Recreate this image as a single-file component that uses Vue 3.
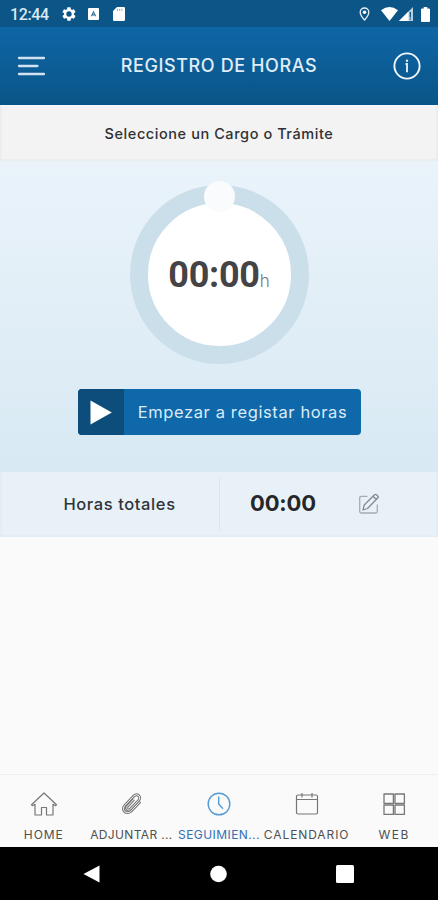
<script setup>
const tabs = [
  { id: 'home', label: 'HOME', spacing: '0.95px' },
  { id: 'clip', label: 'ADJUNTAR ...', spacing: '0.35px' },
  { id: 'clock', label: 'SEGUIMIEN...', spacing: '0.42px', active: true },
  { id: 'calendar', label: 'CALENDARIO', spacing: '0.9px' },
  { id: 'web', label: 'WEB', spacing: '1.5px' },
]
</script>

<template>
  <div class="screen">
    <div class="status">
      <span class="time">12:44</span>
      <svg class="gear" width="16" height="16" viewBox="0 0 24 24"><path fill="#fff" fill-rule="evenodd" d="M19.4 13a7.500 7.500 0 0 0 0-2l2.100-1.650a.5.5 0 0 0 .12-.64l-2-3.460a.5.5 0 0 0-.6-.22l-2.500 1a7.300 7.300 0 0 0-1.700-1l-.38-2.650a.5.5 0 0 0-.5-.42h-4a.5.5 0 0 0-.5.42l-.38 2.650a7.300 7.300 0 0 0-1.700 1l-2.500-1a.5.5 0 0 0-.6.22l-2 3.460a.5.5 0 0 0 .12.640L4.500 11a7.500 7.500 0 0 0 0 2l-2.100 1.650a.5.5 0 0 0-.12.640l2 3.460c.12.220.39.3.6.22l2.500-1a7.300 7.300 0 0 0 1.700 1l.38 2.650c.04.240.25.420.5.420h4c.25 0 .46-.18.5-.42l.38-2.650a7.300 7.300 0 0 0 1.700-1l2.500 1c.22.080.48 0 .6-.22l2-3.460a.5.5 0 0 0-.12-.64zM12 16a4 4 0 1 1 0-8 4 4 0 0 1 0 8z" /></svg>
      <svg class="app" width="11" height="12" viewBox="0 0 11 12"><rect width="11" height="12" rx="1" fill="#fff" /><path d="M3.400 8.300 5.500 3.800l2.100 4.500M4.200 6.900h2.600" fill="none" stroke="#3f789e" stroke-width="1.200" /></svg>
      <svg class="sd" width="12" height="14" viewBox="0 0 12 14"><path d="M4 0h6.800Q12 0 12 1.200v11.600q0 1.200-1.200 1.200H1.200Q0 14 0 12.800V4z" fill="#fff" /><path d="M4.500 1.800v2M6.700 1.800v2M8.900 1.800v2" stroke="#7fa6c2" /></svg>
      <span class="fill"></span>
      <svg class="pin" width="11" height="14" viewBox="0 0 11 14"><path d="M5.500 1C3 1 1.200 2.900 1.200 5.200c0 3 4.300 7.800 4.300 7.800s4.300-4.800 4.300-7.800C9.800 2.900 8 1 5.500 1z" fill="none" stroke="#e6eff5" stroke-width="1.300" /><circle cx="5.500" cy="5.200" r="1.800" fill="#fff" /></svg>
      <svg class="wifi" width="17" height="14" viewBox="0 0 17 14"><path d="M0 3.200Q8.500-3 17 3.200L8.500 14z" fill="#fff" /></svg>
      <svg class="signal" width="14" height="14" viewBox="0 0 14 14"><path d="M14 0v14H0z" fill="#b9cfde" /><path d="M9.500 4.500V14H0z" fill="#fff" /><path d="M11.300 5v5.500M11.300 11.500v1.300" stroke="#0b5587" stroke-width="1.300" /></svg>
      <svg class="battery" width="9" height="15" viewBox="0 0 9 15"><path d="M2.700 0h3.600v1.500H8q1 0 1 1V14q0 1-1 1H1q-1 0-1-1V2.500q0-1 1-1h1.700z" fill="#fff" /></svg>
    </div>

    <header class="header">
      <svg width="28" height="20" viewBox="0 0 28 20"><path d="M2 2h25M2 10h18.500M2 18h25" stroke="#d3e2f0" stroke-width="2.300" stroke-linecap="round" /></svg>
      <h1>REGISTRO DE HORAS</h1>
      <svg width="28" height="28" viewBox="0 0 28 28"><circle cx="14" cy="14" r="12.600" fill="none" stroke="#f2f8fc" stroke-width="1.900" /><circle cx="14" cy="8.800" r="1.200" fill="#e9f3fa" /><path d="M12.500 12H14v8.300" fill="none" stroke="#e9f3fa" stroke-width="1.800" /></svg>
    </header>

    <div class="selector"><span>Seleccione un Cargo o Trámite</span></div>

    <section class="panel">
      <div class="dial">
        <i class="knob"></i>
        <span class="digits">00:00</span><span class="unit">h</span>
      </div>
      <button class="start">
        <span class="play"><svg width="22" height="25" viewBox="0 0 22 25"><path d="M.5.500v24L21.800 12.500z" fill="#fff" /></svg></span>
        <span class="start-label">Empezar a registar horas</span>
      </button>
    </section>

    <section class="totals">
      <div class="total-label"><span>Horas totales</span></div>
      <div class="total-value">
        <b>00:00</b>
        <svg width="22" height="22" viewBox="0 0 22 22" fill="none" stroke-linejoin="round"><path d="M9.500 3.300H3.200Q1.700 3.300 1.700 4.800V18.500Q1.700 20 3.200 20H17.800Q19.300 20 19.300 18.500V11.500" stroke="#a6abaf" stroke-width="1.300" /><path d="m5 17 1.200-5L16.500 1.800Q17.400.8 18.500 1.800L19.700 3Q20.700 4 19.700 5L9.500 15.500zM15 3.300l3.200 3.200" stroke="#85898c" stroke-width="1.300" /></svg>
      </div>
    </section>

    <div class="blank"></div>

    <nav class="tabs">
      <div v-for="t in tabs" :key="t.id" class="tab" :class="{ active: t.active }">
        <svg width="28" height="28" viewBox="0 0 28 28" fill="none" stroke="currentColor" stroke-width="1.200" stroke-linejoin="round">
          <path v-if="t.id === 'home'" d="M14 3 1.500 14.800l.9.900 2.600-1.500V25h6.500v-7.500h5V25H23V14.200l2.600 1.500.9-.9z" />
          <g v-else-if="t.id === 'clip'" transform="translate(2.700 2)">
            <path d="m20.500 9.500-8.700 9.300c-4.700 4.700-11-.8-6.600-5.400l8.700-9.200c3.500-3.600 8.300.5 5.100 4.200l-8.200 8.700c-2.200 2.300-5.200-.4-3.200-2.700l6.500-7.100" stroke-width="2.900" />
            <path d="m20.500 9.500-8.700 9.300c-4.700 4.700-11-.8-6.600-5.400l8.700-9.200c3.500-3.600 8.300.5 5.100 4.200l-8.200 8.700c-2.200 2.300-5.200-.4-3.200-2.700l6.500-7.100" stroke="#fafafa" stroke-width="1" />
          </g>
          <g v-else-if="t.id === 'clock'"><circle cx="14" cy="14" r="10.800" stroke-width="1.400" /><path d="M13.700 6.500V14l4.300 4.700" stroke-width="1.400" /></g>
          <g v-else-if="t.id === 'calendar'"><rect x="3.500" y="5" width="21" height="19" rx="1.500" /><path d="M3.500 9.500h21M9 3v4.500M19 3v4.500" /></g>
          <path v-else d="M4 4h9.400v9.400H4zM15 4h9.400v9.400H15zM4 15h9.400v9.400H4zM15 15h9.400v9.400H15z" stroke-width="1.300" />
        </svg>
        <span class="tab-label" :style="{ letterSpacing: t.spacing }">{{ t.label }}</span>
      </div>
    </nav>

    <div class="system">
      <svg width="17" height="18" viewBox="0 0 17 18"><path d="M16.500.5v17L.5 9z" fill="#fff" /></svg>
      <svg width="17" height="18" viewBox="0 0 17 18"><circle cx="8.500" cy="9" r="8.300" fill="#fff" /></svg>
      <svg width="18" height="18" viewBox="0 0 18 18"><rect width="18" height="18" rx="1.500" fill="#fff" /></svg>
    </div>
  </div>
</template>

<style>
body { margin: 0; }
</style>

<style scoped>
* { box-sizing: border-box; }
svg { display: block; flex: none; }
.screen { width: 438px; height: 900px; display: flex; flex-direction: column; background: #fafafa; font-family: Inter, "Open Sans", sans-serif; overflow: hidden; white-space: nowrap; }
.status { height: 27px; background: #0b5587; display: flex; align-items: center; padding: 1px 8px 0 10px; flex: none; }
.time { font: 500 16px/20px Roboto, sans-serif; color: #dce9f2; width: 51px; letter-spacing: -.4px; padding-top: 2px; }
.app { margin-left: 11px; }
.sd { margin-left: 14px; }
.fill { flex: 1; }
.wifi { margin-left: 11px; }
.signal { margin-left: 1px; }
.battery { margin-left: 8px; }
.header { height: 78px; flex: none; background: linear-gradient(#0e66a6, #0a5587); display: flex; align-items: center; justify-content: space-between; padding: 0 17px 0 17px; }
h1 { margin: 0; font-size: 18px; line-height: 24px; font-weight: 500; color: #e0edf8; letter-spacing: .6px; }
.selector { height: 56px; flex: none; background: #f3f3f3; border: 2px solid #ebeeef; border-top: 2px solid #f4f4fb; display: flex; align-items: center; justify-content: center; font-size: 14.500px; font-weight: 500; color: #303132; letter-spacing: .57px; }
.panel { height: 311px; flex: none; background: linear-gradient(#eaf3fa, #d8e9f3); display: flex; flex-direction: column; align-items: center; padding-top: 24px; }
.dial { position: relative; width: 179px; height: 179px; border-radius: 50%; background: #fff; border: 18px solid #cbdfeb; display: flex; align-items: baseline; justify-content: center; padding-top: 50px; }
.knob { position: absolute; left: 56px; top: -22px; width: 31px; height: 31px; border-radius: 50%; background: #fafbfc; }
.digits { font: 700 36px/44px Roboto, sans-serif; color: #454345; letter-spacing: -.3px; }
.unit { font-size: 17px; font-weight: 300; color: #777; }
.start { margin: 25px 0 0; padding: 0; width: 283px; height: 46px; border: 0; border-radius: 4px; overflow: hidden; background: #0e68aa; display: flex; align-items: center; font-family: inherit; }
.play { width: 46px; height: 46px; background: #0c4d7b; display: flex; align-items: center; justify-content: center; }
.start-label { flex: 1; text-align: center; font-size: 16.500px; font-weight: 400; color: #dcebf8; letter-spacing: .62px; padding-left: 1px; }
.totals { height: 65px; flex: none; background: #e9f1f8; display: flex; align-items: center; border: 2px solid #e3edf3; border-top-width: 0; }
.total-label { width: 218px; height: 54px; border-right: 1px solid #dce5ec; display: flex; align-items: center; justify-content: center; padding-left: 18px; font-size: 16.500px; font-weight: 500; color: #303438; letter-spacing: .6px; }
.total-value { flex: 1; display: flex; align-items: center; padding-left: 30px; }
.total-value b { width: 108px; font-size: 22px; font-weight: 700; color: #252728; margin-top: -2px; letter-spacing: -.15px; }
.blank { flex: 1; }
.tabs { height: 73px; flex: none; border-top: 1px solid #eeeeee; display: grid; grid-template-columns: repeat(5, 1fr); }
.tab { min-width: 0; display: flex; flex-direction: column; align-items: center; padding-top: 15px; color: #777; }
.tab-label { margin-top: 9px; font-size: 12px; line-height: 16px; color: #505050; }
.active { color: #559bd3; }
.active .tab-label { color: #356fb4; }
.system { height: 53px; flex: none; background: #000; display: flex; align-items: center; justify-content: space-between; padding: 0 84px 0 83px; }
.system svg:nth-child(2) { margin-left: 1px; }
</style>
